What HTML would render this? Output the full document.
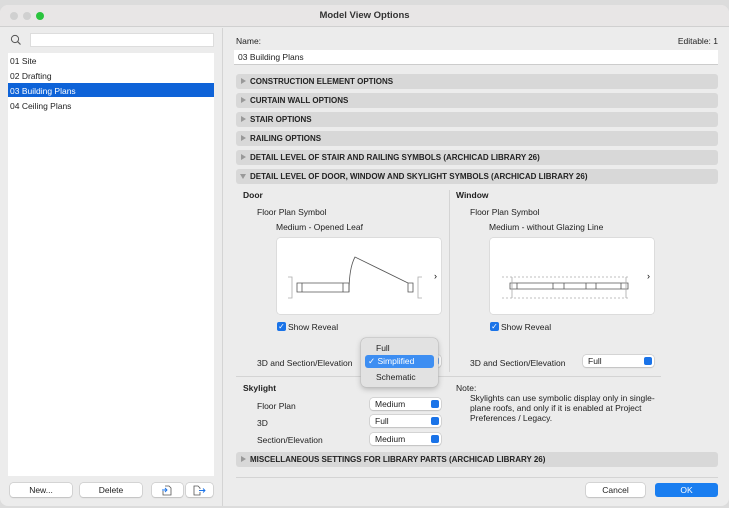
<!DOCTYPE html>
<html><head><meta charset="utf-8"><style>
*{box-sizing:border-box;margin:0;padding:0}
body{width:729px;height:508px;overflow:hidden;background:#dcdcdc;font-family:"Liberation Sans",sans-serif;font-size:8.5px;color:#222;position:relative}
.a{position:absolute}
.win{left:0;top:5px;width:729px;height:501px;background:#ececec;border-radius:8px;overflow:hidden}
.tb{left:0;top:0;width:729px;height:22px;background:#e8e6e6;border-bottom:1px solid #d0d0d0}
.hdr{left:236px;width:482px;height:15px;background:#d8d8d8;border-radius:3px;font-weight:bold;font-size:8px;line-height:15px;padding-left:14px;color:#222}
.hdr:before{content:"";position:absolute;left:5px;top:4px;border-left:5px solid #999;border-top:3.5px solid transparent;border-bottom:3.5px solid transparent}
.hdr.o:before{border-top:5px solid #999;border-left:3.5px solid transparent;border-right:3.5px solid transparent;border-bottom:0;top:5px;left:4px}
.btn{background:#fff;border-radius:3px;box-shadow:0 0 0 .5px #bbb,0 1px 1px rgba(0,0,0,.15);text-align:center;line-height:14px;height:14px}
.sel{background:#fff;border-radius:3px;box-shadow:0 0 0 .5px #bbb,0 1px 1px rgba(0,0,0,.15);height:12px;line-height:12px;padding-left:5px}
.sel:after{content:"";position:absolute;right:2px;top:2px;width:8px;height:8px;background:#1a73e8;border-radius:2px}
.cb{width:9px;height:9px;background:#1a73e8;border-radius:2px;color:#fff;font-size:8px;line-height:9px;text-align:center}
</style></head><body>
<div class="a win">
<div class="a tb"></div>
<div class="a" style="left:10px;top:7px;width:8px;height:8px;border-radius:50%;background:#d0d0d0"></div>
<div class="a" style="left:23px;top:7px;width:8px;height:8px;border-radius:50%;background:#d0d0d0"></div>
<div class="a" style="left:36px;top:7px;width:8px;height:8px;border-radius:50%;background:#2ac43e"></div>
<div class="a" style="left:0;top:5px;width:729px;text-align:center;font-weight:bold;font-size:9.5px;color:#333">Model View Options</div>
</div>
<div class="a" style="left:222px;top:28px;width:1px;height:478px;background:#d4d4d4"></div>
<svg class="a" style="left:10px;top:34px" width="12" height="12"><circle cx="5" cy="5" r="3.6" fill="none" stroke="#555" stroke-width="1"/><line x1="7.7" y1="7.7" x2="10.5" y2="10.5" stroke="#555" stroke-width="1.1"/></svg>
<div class="a" style="left:30px;top:33px;width:184px;height:14px;background:#fff;border:1px solid #ddd"></div>
<div class="a" style="left:8px;top:53px;width:206px;height:423px;background:#fff"></div>
<div class="a" style="left:10px;top:56px">01 Site</div>
<div class="a" style="left:10px;top:71px">02 Drafting</div>
<div class="a" style="left:8px;top:83px;width:206px;height:14px;background:#0e63d8"></div>
<div class="a" style="left:10px;top:86px;color:#fff">03 Building Plans</div>
<div class="a" style="left:10px;top:101px">04 Ceiling Plans</div>
<div class="a btn" style="left:10px;top:483px;width:62px">New...</div>
<div class="a btn" style="left:80px;top:483px;width:62px">Delete</div>
<div class="a btn" style="left:152px;top:483px;width:31px"></div>
<svg class="a" style="left:161px;top:485px" width="12" height="11"><path d="M4 1H8L10 3V10H2V6" fill="none" stroke="#555" stroke-width=".8"/><path d="M1 5H6M4 3L6 5L4 7" fill="none" stroke="#1a73e8" stroke-width=".9"/></svg>
<div class="a btn" style="left:186px;top:483px;width:27px"></div>
<svg class="a" style="left:193px;top:485px" width="14" height="11"><path d="M7 7V10H1V1H5L7 3V4" fill="none" stroke="#555" stroke-width=".8"/><path d="M6 5.5H12M10 3.5L12 5.5L10 7.5" fill="none" stroke="#1a73e8" stroke-width=".9"/></svg>

<div class="a" style="left:236px;top:36px">Name:</div>
<div class="a" style="left:660px;top:36px;width:58px;text-align:right">Editable: 1</div>
<div class="a" style="left:234px;top:50px;width:484px;height:15px;background:#fff;border-bottom:1px solid #ccc;padding-left:4px;line-height:15px">03 Building Plans</div>
<div class="a hdr" style="top:74px">CONSTRUCTION ELEMENT OPTIONS</div>
<div class="a hdr" style="top:93px">CURTAIN WALL OPTIONS</div>
<div class="a hdr" style="top:112px">STAIR OPTIONS</div>
<div class="a hdr" style="top:131px">RAILING OPTIONS</div>
<div class="a hdr" style="top:150px">DETAIL LEVEL OF STAIR AND RAILING SYMBOLS (ARCHICAD LIBRARY 26)</div>
<div class="a hdr o" style="top:169px">DETAIL LEVEL OF DOOR, WINDOW AND SKYLIGHT SYMBOLS (ARCHICAD LIBRARY 26)</div>

<div class="a" style="left:243px;top:190px;font-weight:bold">Door</div>
<div class="a" style="left:257px;top:207px">Floor Plan Symbol</div>
<div class="a" style="left:276px;top:222px">Medium - Opened Leaf</div>
<div class="a" style="left:277px;top:238px;width:164px;height:76px;background:#fff;border-radius:3px;box-shadow:0 0 0 .5px #ccc"></div>
<svg class="a" style="left:277px;top:238px" width="164" height="76"><g fill="none" stroke="#555" stroke-width=".8"><path d="M11 39H15V60H11" stroke="#aaa"/><path d="M20 45H72V54H20ZM25 45V54M66 45V54"/><path d="M72 54Q72 30 78 19L131 45"/><path d="M131 45H136V54H131Z"/><path d="M145 39H141V60H145" stroke="#aaa"/></g><text x="157" y="41" font-size="9" font-family="Liberation Sans">›</text></svg>
<div class="a cb" style="left:277px;top:322px">✓</div>
<div class="a" style="left:288px;top:322px">Show Reveal</div>
<div class="a" style="left:257px;top:358px">3D and Section/Elevation</div>
<div class="a" style="left:449px;top:190px;width:1px;height:182px;background:#d4d4d4"></div>

<div class="a" style="left:456px;top:190px;font-weight:bold">Window</div>
<div class="a" style="left:470px;top:207px">Floor Plan Symbol</div>
<div class="a" style="left:489px;top:222px">Medium - without Glazing Line</div>
<div class="a" style="left:490px;top:238px;width:164px;height:76px;background:#fff;border-radius:3px;box-shadow:0 0 0 .5px #ccc"></div>
<svg class="a" style="left:490px;top:238px" width="164" height="76"><g fill="none" stroke="#555" stroke-width=".8"><path d="M20 45H138V51H20ZM27 45V51M63 45V51M74 45V51M96 45V51M106 45V51M131 45V51"/><path d="M12 39H140M12 60H140" stroke-dasharray="2 2" stroke="#aaa"/><path d="M22 39V60M136 39V60" stroke="#aaa"/></g><text x="157" y="41" font-size="9" font-family="Liberation Sans">›</text></svg>
<div class="a cb" style="left:490px;top:322px">✓</div>
<div class="a" style="left:501px;top:322px">Show Reveal</div>
<div class="a" style="left:470px;top:358px">3D and Section/Elevation</div>
<div class="a sel" style="left:583px;top:355px;width:71px">Full</div>
<div class="a" style="left:236px;top:376px;width:425px;height:1px;background:#d4d4d4"></div>

<div class="a" style="left:243px;top:383px;font-weight:bold">Skylight</div>
<div class="a" style="left:257px;top:401px">Floor Plan</div>
<div class="a" style="left:257px;top:418px">3D</div>
<div class="a" style="left:257px;top:435px">Section/Elevation</div>
<div class="a sel" style="left:370px;top:398px;width:71px">Medium</div>
<div class="a sel" style="left:370px;top:415px;width:71px">Full</div>
<div class="a sel" style="left:370px;top:433px;width:71px">Medium</div>
<div class="a" style="left:456px;top:383px">Note:</div>
<div class="a" style="left:470px;top:393px;line-height:10px;width:190px">Skylights can use symbolic display only in single-plane roofs, and only if it is enabled at Project Preferences / Legacy.</div>
<div class="a hdr" style="top:452px">MISCELLANEOUS SETTINGS FOR LIBRARY PARTS (ARCHICAD LIBRARY 26)</div>
<div class="a" style="left:236px;top:477px;width:482px;height:1px;background:#d4d4d4"></div>
<div class="a btn" style="left:586px;top:483px;width:59px">Cancel</div>
<div class="a btn" style="left:655px;top:483px;width:63px;background:#1a7ef0;color:#fff;box-shadow:none">OK</div>

<div class="a sel" style="left:420px;top:355px;width:21px"></div>
<div class="a" style="left:361px;top:338px;width:77px;height:49px;background:#e2e2e2;border-radius:5px;box-shadow:0 0 0 .5px #bbb,0 2px 6px rgba(0,0,0,.25)"></div>
<div class="a" style="left:376px;top:343px">Full</div>
<div class="a" style="left:365px;top:355px;width:69px;height:13px;background:#3d8ef2;border-radius:3px;color:#fff;line-height:13px;padding-left:3px">✓ Simplified</div>
<div class="a" style="left:376px;top:372px">Schematic</div>
</body></html>
